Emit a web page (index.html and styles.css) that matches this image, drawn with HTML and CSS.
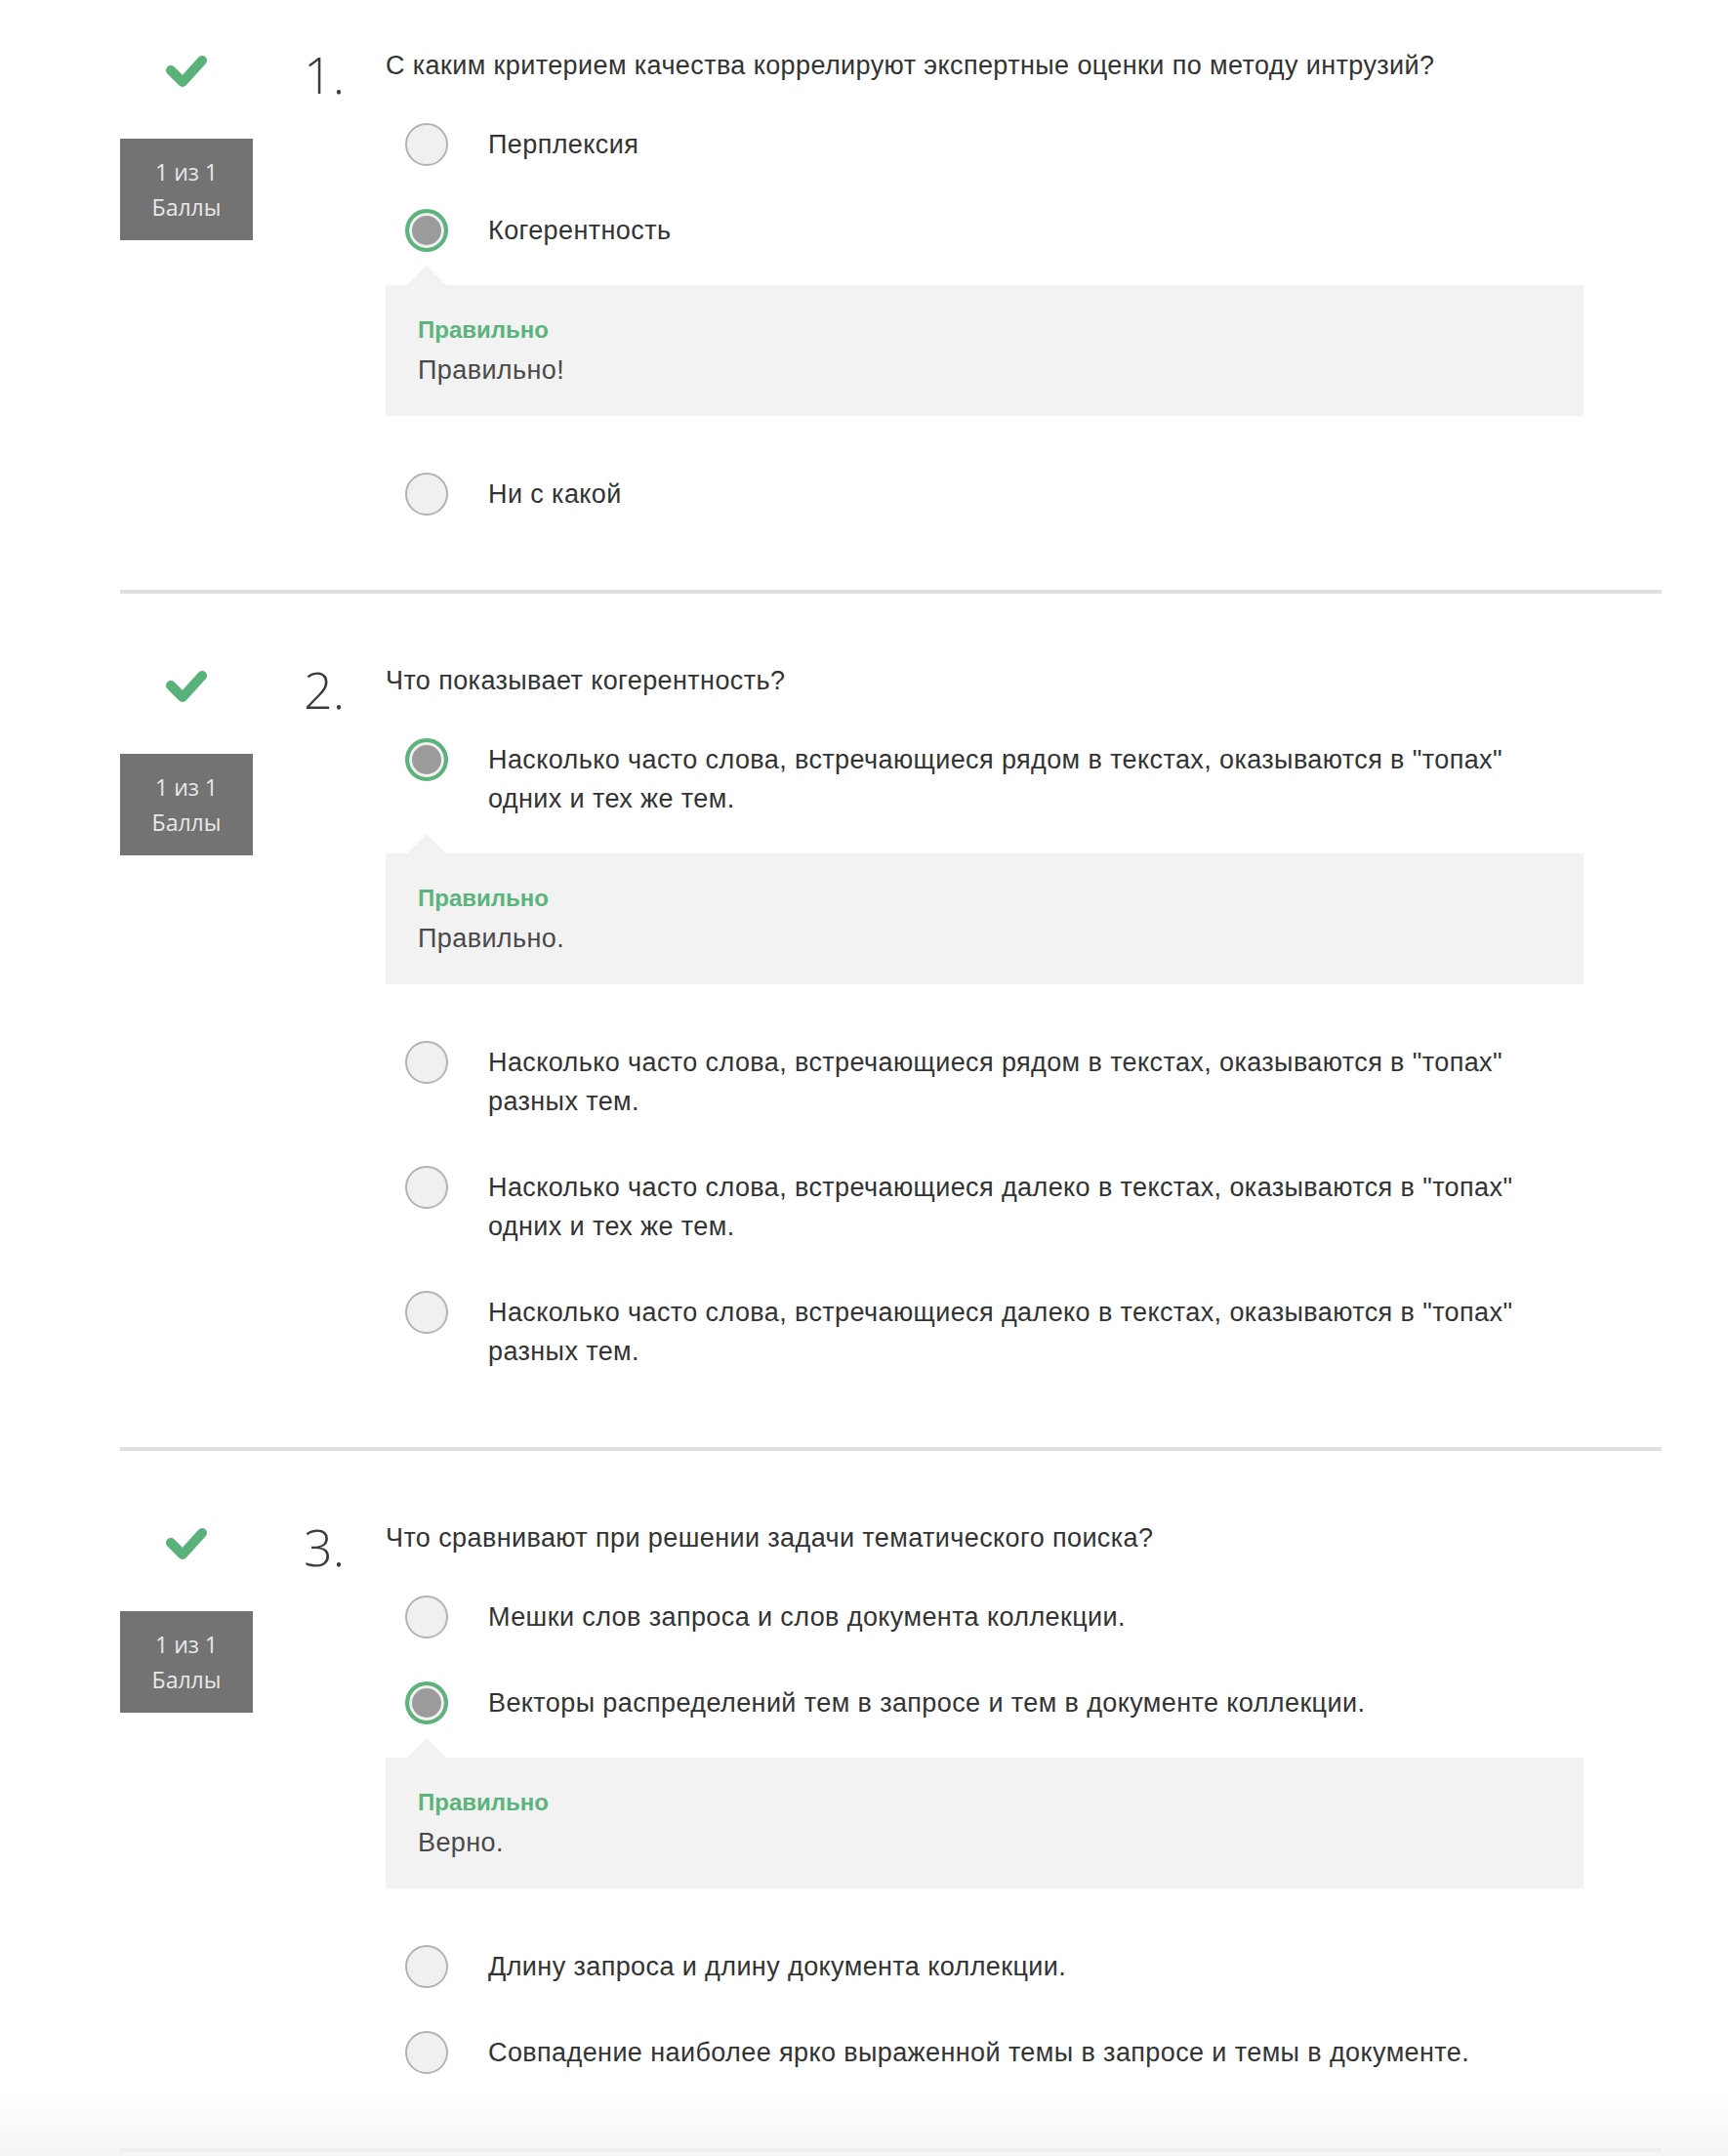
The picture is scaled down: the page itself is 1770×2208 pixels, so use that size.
FILE: index.html
```html
<!DOCTYPE html>
<html lang="ru">
<head>
<meta charset="utf-8">
<title>Тест</title>
<link rel="stylesheet" href="styles.css">
</head>
<body>
<main class="quiz">

  <section class="question first">
    <div class="score-col">
      <svg class="check" viewBox="0 0 46 36" width="46" height="36"><path d="M7 17 L19 29 L39 7" /></svg>
      <div class="badge"><span>1 из 1</span><span>Баллы</span></div>
    </div>
    <div class="num">1.</div>
    <div class="body">
      <div class="qtext">С каким критерием качества коррелируют экспертные оценки по методу интрузий?</div>
      <div class="options">
        <div class="option"><span class="radio"></span><span class="label">Перплексия</span></div>
        <div class="option-wrap">
          <div class="option"><span class="radio checked"></span><span class="label">Когерентность</span></div>
          <div class="feedback"><div class="fb-title">Правильно</div><div class="fb-text">Правильно!</div></div>
        </div>
        <div class="option"><span class="radio"></span><span class="label">Ни с какой</span></div>
      </div>
    </div>
  </section>
  <hr class="divider">

  <section class="question">
    <div class="score-col">
      <svg class="check" viewBox="0 0 46 36" width="46" height="36"><path d="M7 17 L19 29 L39 7" /></svg>
      <div class="badge"><span>1 из 1</span><span>Баллы</span></div>
    </div>
    <div class="num">2.</div>
    <div class="body">
      <div class="qtext">Что показывает когерентность?</div>
      <div class="options">
        <div class="option-wrap">
          <div class="option"><span class="radio checked"></span><span class="label">Насколько часто слова, встречающиеся рядом в текстах, оказываются в "топах" одних и тех же тем.</span></div>
          <div class="feedback"><div class="fb-title">Правильно</div><div class="fb-text">Правильно.</div></div>
        </div>
        <div class="option"><span class="radio"></span><span class="label">Насколько часто слова, встречающиеся рядом в текстах, оказываются в "топах" разных тем.</span></div>
        <div class="option"><span class="radio"></span><span class="label">Насколько часто слова, встречающиеся далеко в текстах, оказываются в "топах" одних и тех же тем.</span></div>
        <div class="option"><span class="radio"></span><span class="label">Насколько часто слова, встречающиеся далеко в текстах, оказываются в "топах" разных тем.</span></div>
      </div>
    </div>
  </section>
  <hr class="divider">

  <section class="question">
    <div class="score-col">
      <svg class="check" viewBox="0 0 46 36" width="46" height="36"><path d="M7 17 L19 29 L39 7" /></svg>
      <div class="badge"><span>1 из 1</span><span>Баллы</span></div>
    </div>
    <div class="num">3.</div>
    <div class="body">
      <div class="qtext">Что сравнивают при решении задачи тематического поиска?</div>
      <div class="options">
        <div class="option"><span class="radio"></span><span class="label">Мешки слов запроса и слов документа коллекции.</span></div>
        <div class="option-wrap">
          <div class="option"><span class="radio checked"></span><span class="label">Векторы распределений тем в запросе и тем в документе коллекции.</span></div>
          <div class="feedback"><div class="fb-title">Правильно</div><div class="fb-text">Верно.</div></div>
        </div>
        <div class="option"><span class="radio"></span><span class="label">Длину запроса и длину документа коллекции.</span></div>
        <div class="option"><span class="radio"></span><span class="label">Совпадение наиболее ярко выраженной темы в запросе и темы в документе.</span></div>
      </div>
    </div>
  </section>
  <hr class="divider">

</main>
<div class="fade"></div>
</body>
</html>
```

FILE: styles.css
```css
html, body {
  margin: 0;
  padding: 0;
  background: #ffffff;
}

body {
  font-family: "Liberation Sans", Arial, sans-serif;
  color: #333333;
}

.quiz {
  width: 1579px;
  margin-left: 123px;
}

.question {
  display: grid;
  grid-template-columns: 136px 136px 1227px;
  padding-top: 77px;
  padding-bottom: 76px;
}

.question.first {
  padding-top: 55px;
}

.divider {
  margin: 0;
  border: 0;
  height: 4px;
  background: #e0e0e0;
}

.score-col {
  display: flex;
  flex-direction: column;
  align-items: center;
}

.check {
  display: block;
  margin-bottom: 51px;
}

.check path {
  fill: none;
  stroke: #59b27a;
  stroke-width: 10;
  stroke-linecap: round;
  stroke-linejoin: round;
}

.badge {
  width: 136px;
  height: 104px;
  background: #737373;
  color: #e8e8e8;
  font-family: "Open Sans", "Liberation Sans", sans-serif;
  font-size: 23px;
  line-height: 36px;
  display: flex;
  flex-direction: column;
  align-items: center;
  justify-content: center;
}

.num {
  font-family: "Open Sans", sans-serif;
  font-weight: 300;
  font-size: 52px;
  line-height: 52px;
  color: #3a3a3a;
  padding-left: 52px;
  margin-top: -5px;
}

.body {
  display: flex;
  flex-direction: column;
}

.qtext {
  font-size: 27px;
  letter-spacing: 0.4px;
  line-height: 40px;
  margin-top: -8px;
  color: #333333;
}

.options {
  margin-top: 39px;
  display: flex;
  flex-direction: column;
  gap: 44px;
}

.option {
  display: flex;
  align-items: flex-start;
  padding-left: 20px;
}

.radio {
  flex: none;
  box-sizing: border-box;
  width: 44px;
  height: 44px;
  border-radius: 50%;
  border: 2px solid #b3b3b3;
  background: #f0f0f0;
}

.radio.checked {
  border: 4px solid #5bb47b;
  background: #9b9b9b;
  box-shadow: inset 0 0 0 3px #f0f0f0;
}

.label {
  margin-left: 41px;
  padding: 2px 0;
  font-size: 27px;
  letter-spacing: 0.4px;
  line-height: 40px;
  color: #333333;
  max-width: 1090px;
}

.feedback {
  position: relative;
  margin-top: 34px;
  margin-bottom: 14px;
  background: #f2f2f2;
  height: 134px;
  box-sizing: border-box;
  padding: 31px 33px 0;
}

.feedback::before {
  content: "";
  position: absolute;
  top: -20px;
  left: 22px;
  width: 0;
  height: 0;
  border-left: 20px solid transparent;
  border-right: 20px solid transparent;
  border-bottom: 20px solid #f2f2f2;
}

.fb-title {
  font-weight: bold;
  font-size: 24px;
  line-height: 30px;
  color: #5bb47b;
}

.fb-text {
  margin-top: 6px;
  font-size: 27px;
  letter-spacing: 0.4px;
  line-height: 40px;
  color: #4a4a4a;
}

.fade {
  position: fixed;
  left: 0;
  right: 0;
  bottom: 0;
  height: 64px;
  background: linear-gradient(to bottom, rgba(243, 243, 243, 0), rgba(243, 243, 243, 0.85));
  pointer-events: none;
}
```
